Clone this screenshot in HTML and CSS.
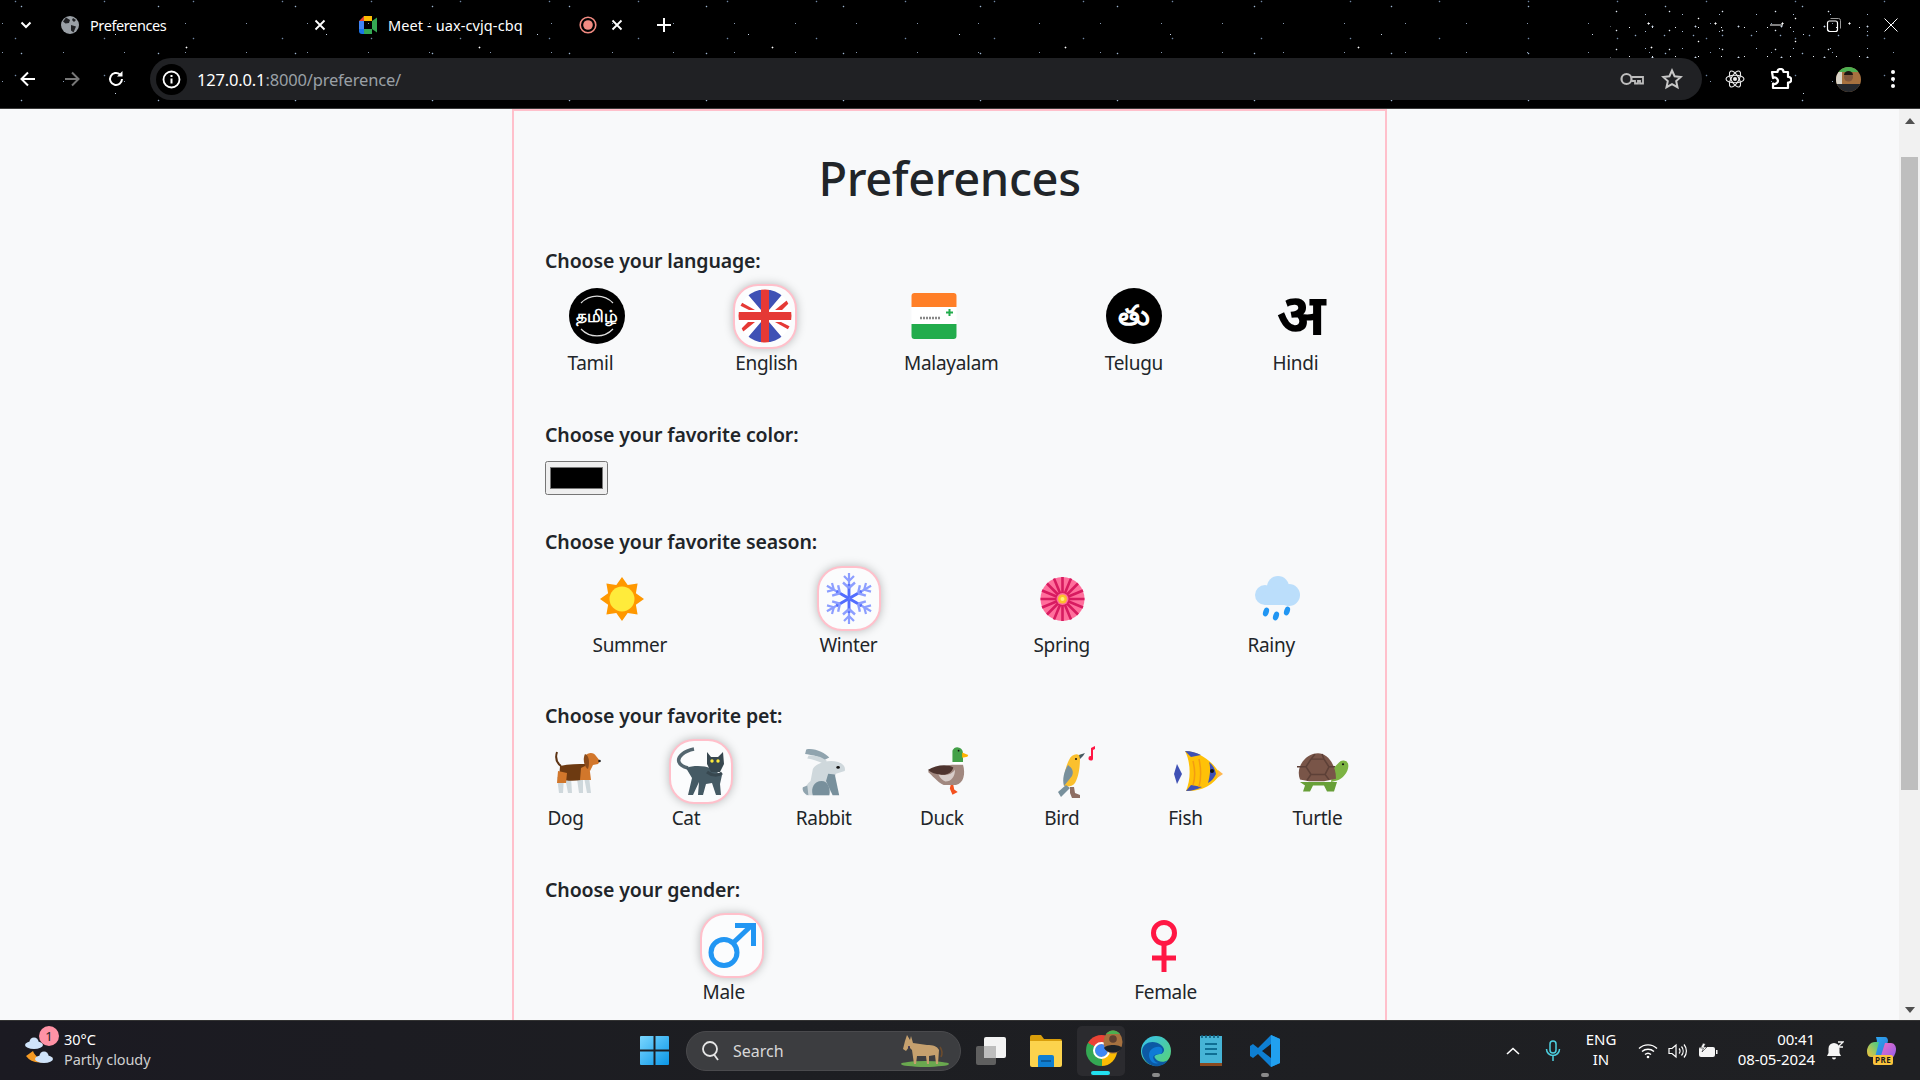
FILE: index.html
```html
<!DOCTYPE html>
<html lang="en">
<head>
    <meta charset="UTF-8">
    <title>Preferences</title>
    <link rel="stylesheet" href="styles.css">
</head>
<body>
<div class="browser">
    <div class="star-cluster"></div>
    <div class="tabstrip">
        <svg class="tab-menu" width="16" height="16" viewBox="0 0 16 16"><path d="M3.5 5.5 8 10l4.5-4.5" fill="none" stroke="#fff" stroke-width="2"/></svg>
        <div class="tab tab-one">
            <svg class="favicon" width="18" height="18" viewBox="0 0 18 18"><circle cx="9" cy="9" r="9" fill="#9aa0a6"/><path d="M5 1.5 9 4 8 7 4.5 7.5 2 5.5ZM10 9l5 1.5-2.5 6-2.5-2ZM12 2l3 2-2 2-2-2Z" fill="#202124"/></svg>
            <span class="tab-title">Preferences</span>
            <svg class="tab-close" width="12" height="12" viewBox="0 0 12 12"><path d="M1.5 1.5l9 9M10.5 1.5l-9 9" stroke="#fff" stroke-width="1.8"/></svg>
        </div>
        <div class="tab tab-two">
            <svg class="favicon" width="18" height="18" viewBox="0 0 18 18"><path d="M0 5 5 0h8v5H5v8H0Z" fill="#ea4335"/><path d="M5 0h8v5H5Z" fill="#fbbc04"/><path d="M0 5h5v8H0Z" fill="#4285f4"/><path d="M0 13h5h8v5H3a3 3 0 0 1-3-3Z" fill="#1a73e8"/><path d="M5 13h8v5H5Z" fill="#34a853"/><path d="M13 5l5-3.5v15L13 13Z" fill="#34a853"/></svg>
            <span class="tab-title">Meet - uax-cvjq-cbq</span>
            <svg class="tab-record" width="18" height="18" viewBox="0 0 18 18"><circle cx="9" cy="9" r="7.800" fill="none" stroke="#f28b82" stroke-width="1.6"/><circle cx="9" cy="9" r="4.800" fill="#f28b82"/></svg>
            <svg class="tab-close" width="12" height="12" viewBox="0 0 12 12"><path d="M1.5 1.5l9 9M10.5 1.5l-9 9" stroke="#fff" stroke-width="1.8"/></svg>
        </div>
        <svg class="new-tab" width="14" height="14" viewBox="0 0 14 14"><path d="M7 0v14M0 7h14" stroke="#fff" stroke-width="2"/></svg>
        <div class="window-buttons">
            <svg width="16" height="16" viewBox="0 0 16 16"><path d="M1 8h13" stroke="#fff" stroke-width="1"/></svg>
            <svg width="16" height="16" viewBox="0 0 16 16"><rect x="1.5" y="4" width="10" height="10.500" rx="2" fill="none" stroke="#fff" stroke-width="1.2"/><path d="M4.5 1.500h8a2 2 0 0 1 2 2v8" fill="none" stroke="#999"/></svg>
            <svg width="16" height="16" viewBox="0 0 16 16"><path d="M1.5 1.5l13 13M14.5 1.5l-13 13" stroke="#fff" stroke-width="1"/></svg>
        </div>
    </div>
    <div class="toolbar">
        <button class="nav-btn"><svg width="18" height="18" viewBox="0 0 18 18"><path d="M16 9H3M9 2.500 2.500 9 9 15.500" fill="none" stroke="#fff" stroke-width="2"/></svg></button>
        <button class="nav-btn"><svg width="18" height="18" viewBox="0 0 18 18"><path d="M2 9h13M9 2.500 15.500 9 9 15.500" fill="none" stroke="#777" stroke-width="2"/></svg></button>
        <button class="nav-btn"><svg width="18" height="18" viewBox="0 0 18 18"><path d="M15 9a6 6 0 1 1-2-4.500" fill="none" stroke="#fff" stroke-width="2"/><path d="M15.500 1v5.500H10Z" fill="#fff"/></svg></button>
        <div class="address">
            <span class="site-info"><svg width="19" height="19" viewBox="0 0 19 19"><circle cx="9.500" cy="9.500" r="8" fill="none" stroke="#fff" stroke-width="1.800"/><path d="M9.500 8.500v5M9.500 5v2" stroke="#fff" stroke-width="2"/></svg></span>
            <span class="url"><span class="url-host">127.0.0.1</span>:8000/preference/</span>
            <svg class="addr-key" width="24" height="14" viewBox="0 0 24 14"><circle cx="6.500" cy="7" r="5" fill="none" stroke="#bdbdbd" stroke-width="2.200"/><path d="M11.500 5H23v6.500h-3V9h-2v2.500h-3V9h-3.500" fill="none" stroke="#bdbdbd" stroke-width="1.800"/></svg>
            <svg class="addr-star" width="22" height="22" viewBox="0 0 22 22"><path d="M11 2.500l2.600 5.700 6.200.7-4.600 4.200 1.300 6.100L11 16.100 5.500 19.200l1.300-6.100L2.200 8.900l6.200-.7Z" fill="none" stroke="#c8c8c8" stroke-width="2"/></svg>
        </div>
        <div class="extensions">
            <svg class="ext-react" width="20" height="20" viewBox="0 0 20 20"><g fill="none" stroke="#eee" stroke-width="1.100"><ellipse cx="10" cy="10" rx="9" ry="3.800"/><ellipse cx="10" cy="10" rx="9" ry="3.800" transform="rotate(60 10 10)"/><ellipse cx="10" cy="10" rx="9" ry="3.800" transform="rotate(120 10 10)"/></g><circle cx="10" cy="10" r="2" fill="#eee"/></svg>
            <svg class="ext-puzzle" width="22" height="22" viewBox="0 0 22 22"><path d="M2 4h5.500a3 3 0 1 1 6 0H18v5a2.800 2.800 0 1 1 0 5.500V20H3v-4.500a3.200 3.200 0 1 0 0-5.500Z" fill="none" stroke="#fff" stroke-width="2.200" stroke-linejoin="round"/></svg>
            <svg class="ext-avatar" width="25" height="25" viewBox="0 0 25 25"><defs><clipPath id="avatarClip"><circle cx="12.500" cy="12.500" r="12.500"/></clipPath></defs><g clip-path="url(#avatarClip)"><rect width="25" height="25" fill="#a6713f"/><rect width="25" height="5" fill="#4caf50"/><rect width="6" y="5" height="12" fill="#d9d4c8"/><circle cx="12.500" cy="10" r="4.500" fill="#80573b"/><path d="M8 8a4.500 4 0 0 1 9 0Z" fill="#1c1612"/><rect y="17" width="25" height="8" fill="#26292e"/></g></svg>
            <svg class="ext-menu" width="6" height="20" viewBox="0 0 6 20"><circle cx="3" cy="3" r="2" fill="#fff"/><circle cx="3" cy="10" r="2" fill="#fff"/><circle cx="3" cy="17" r="2" fill="#fff"/></svg>
        </div>
    </div>
</div>

<div class="viewport">
    <div class="page">
        <div class="card">
            <h1>Preferences</h1>

            <section class="group">
                <h2>Choose your language:</h2>
                <div class="options options-language">
                    <div class="option">
                        <div class="pick"><svg viewBox="0 0 60 60"><circle cx="30" cy="30" r="28" fill="#000"/><path d="M14 17a22 22 0 0 1 32 0M14 43a22 22 0 0 0 32 0" fill="none" stroke="#ddd" stroke-width="1.2"/><text x="30" y="36" class="logo-text logo-tamil">தமிழ்</text></svg></div>
                        <span class="option-name">Tamil</span>
                    </div>
                    <div class="option">
                        <div class="pick selected"><svg viewBox="0 0 60 60"><defs><clipPath id="flagClip"><circle cx="30" cy="30" r="26.500"/></clipPath></defs><g clip-path="url(#flagClip)"><rect width="60" height="60" fill="#fff"/><path d="M9 4 26 4V24ZM34 4H51L34 24ZM9 56H26V36ZM34 56H51L34 36Z" fill="#3f51b5"/><path d="M4 15 20 24H14L4 19ZM56 15 47 24H40L56 11ZM4 45 13 36H20L4 49ZM56 45 40 36H46L56 41Z" fill="#e53935"/><path d="M26 0h8v60h-8ZM0 26h60v8H0Z" fill="#e53935"/></g></svg></div>
                        <span class="option-name">English</span>
                    </div>
                    <div class="option">
                        <div class="pick"><svg viewBox="0 0 60 60"><rect x="7.500" y="7" width="45" height="46" rx="3" fill="#fff"/><path d="M7.500 10a3 3 0 0 1 3-3h39a3 3 0 0 1 3 3v11h-45Z" fill="#ff7f27"/><path d="M7.500 38h45v12a3 3 0 0 1-3 3h-39a3 3 0 0 1-3-3Z" fill="#22ac4c"/><path d="M45.500 23v7M42 26.500h7" stroke="#22ac4c" stroke-width="2"/><path d="M16 32h20" stroke="#888" stroke-width="2.600" stroke-dasharray="2 1"/></svg></div>
                        <span class="option-name">Malayalam</span>
                    </div>
                    <div class="option">
                        <div class="pick"><svg viewBox="0 0 60 60"><circle cx="30" cy="30" r="28" fill="#000"/><text x="30" y="39" class="logo-text logo-telugu">తు</text></svg></div>
                        <span class="option-name">Telugu</span>
                    </div>
                    <div class="option">
                        <div class="pick"><svg viewBox="0 0 60 60"><text x="29" y="49" class="logo-text logo-hindi">अ</text></svg></div>
                        <span class="option-name">Hindi</span>
                    </div>
                </div>
            </section>

            <section class="group group-color">
                <h2>Choose your favorite color:</h2>
                <input class="color-input" type="color" value="#000000">
            </section>

            <section class="group group-season">
                <h2>Choose your favorite season:</h2>
                <div class="options options-season">
                    <div class="option">
                        <div class="pick"><svg viewBox="0 0 60 60"><path d="M30 9l5.700 8.100L45.600 15.400l-1.700 9.900L52 31l-8.100 5.700 1.700 9.900-9.900-1.700L30 53l-5.700-8.100-9.900 1.700 1.700-9.900L8 31l8.100-5.700-1.700-9.900 9.900 1.700Z" fill="#ff9800"/><circle cx="30" cy="31" r="12.500" fill="#ffeb3b"/></svg></div>
                        <span class="option-name">Summer</span>
                    </div>
                    <div class="option">
                        <div class="pick selected"><svg viewBox="0 0 60 60"><defs><g id="flakeArm"><path d="M30 30.500V5" stroke="#8c9eff" stroke-width="2.200"/><path d="M30 13l-5-5M30 13l5-5" stroke="#8c9eff" stroke-width="2.200"/><path d="M30 30.500V16" stroke="#536dfe" stroke-width="2.800"/><path d="M30 20l-6-5.500M30 20l6-5.500" stroke="#8c9eff" stroke-width="2.400"/></g></defs><use href="#flakeArm"/><use href="#flakeArm" transform="rotate(60 30 30.500)"/><use href="#flakeArm" transform="rotate(120 30 30.500)"/><use href="#flakeArm" transform="rotate(180 30 30.500)"/><use href="#flakeArm" transform="rotate(240 30 30.500)"/><use href="#flakeArm" transform="rotate(300 30 30.500)"/></svg></div>
                        <span class="option-name">Winter</span>
                    </div>
                    <div class="option">
                        <div class="pick"><svg viewBox="0 0 60 60"><circle cx="29.500" cy="31" r="22" fill="#ff6f9c"/><g stroke="#d81b60" stroke-width="2.600"><path d="M29.500 9v44M7.500 31h44M14 15.500l31 31M45 15.500l-31 31M21 10.600l17 40.800M38 10.600l-17 40.800M9 22.500l41 17M50 22.500l-41 17"/></g><circle cx="29.500" cy="31" r="6" fill="#ff6f9c"/><circle cx="29.500" cy="31" r="4.500" fill="#fbc02d"/><circle cx="29.500" cy="31" r="2" fill="#fff176"/></svg></div>
                        <span class="option-name">Spring</span>
                    </div>
                    <div class="option">
                        <div class="pick"><svg viewBox="0 0 60 60"><g fill="#bbdefb"><circle cx="31" cy="19" r="11"/><circle cx="18" cy="27" r="10"/><circle cx="42" cy="27" r="11"/><rect x="14" y="24" width="32" height="13" rx="6"/></g><g fill="#2196f3"><ellipse cx="19" cy="44" rx="2.800" ry="4.500" transform="rotate(20 19 44)"/><ellipse cx="29" cy="48" rx="2.800" ry="4.500" transform="rotate(20 29 48)"/><ellipse cx="40" cy="43" rx="2.800" ry="4.500" transform="rotate(20 40 43)"/></g></svg></div>
                        <span class="option-name">Rainy</span>
                    </div>
                </div>
            </section>

            <section class="group">
                <h2>Choose your favorite pet:</h2>
                <div class="options">
                    <div class="option">
                        <div class="pick"><svg viewBox="0 0 60 60"><path d="M10 11c-2 6 0 11 4 14" fill="none" stroke="#5d3313" stroke-width="2"/><path d="M10 36h7l-1 16h-4ZM18 36h6l1 16h-4ZM30 38h6v14h-4ZM37 36h5l2 16h-4Z" fill="#cfd8dc"/><path d="M13 25c9-2 18-2 26-2l3 14c-8 3-20 4-30 1Z" fill="#6d3a11"/><path d="M11 30l9 2-1 10h-9ZM34 27l8-4 2 16H33Z" fill="#d2772b"/><path d="M38 15c3-4 9-4 11 0l4 5-2 3-5 1-3 6-5-4Z" fill="#d2772b"/><path d="M38 13c4 1 5 9 3 15-3-1-6-9-3-15Z" fill="#8a4b1b"/><circle cx="52.500" cy="20" r="1.300" fill="#222"/></svg></div>
                        <span class="option-name">Dog</span>
                    </div>
                    <div class="option">
                        <div class="pick selected"><svg viewBox="0 0 60 60"><path d="M23 8c-10 2-17 8-15 13 1 3 5 5 9 6" fill="none" stroke="#54666f" stroke-width="3.500"/><path d="M15 27c8-3 19-2 24 0l12 7-2 9 1 11h-5l-4-12-6 1-3 11h-5l1-13-6 13h-5l4-17Z" fill="#455a64"/><path d="M36 11l4 5h7l5-5 1 12-4 8h-9l-4-8Z" fill="#37474f"/><path d="M36 31c5 4 11 4 15 1" fill="none" stroke="#37474f" stroke-width="3"/><circle cx="41" cy="20" r="1.700" fill="#ffeb3b"/><circle cx="47" cy="20" r="1.700" fill="#ffeb3b"/></svg></div>
                        <span class="option-name">Cat</span>
                    </div>
                    <div class="option">
                        <div class="pick"><svg viewBox="0 0 60 60"><g transform="translate(-2 3) scale(1.1 .9)"><path d="M12 6c8-2 17 4 21 9l-5 3c-5-5-12-6-17-7Z" fill="#90a4ae"/><path d="M14 13c7-1 13 2 17 6l-3 3c-5-3-10-5-15-6Z" fill="#cfd8dc"/><path d="M18 28c3-7 14-11 23-8 5 2 7 6 6 10l-8 3-6 24H12c-3-6 0-12 4-16Z" fill="#cfd8dc"/><path d="M14 57c-4-1-6-6-5-9l4-2Z" fill="#90a4ae"/><path d="M18 57c-2-8 1-16 8-16 6 0 8 8 7 16Z" fill="#78909c"/><path d="M32 33l6 1 4 23h-6l-6-16Z" fill="#78909c"/><circle cx="41" cy="26" r="1.600" fill="#111"/></g></svg></div>
                        <span class="option-name">Rabbit</span>
                    </div>
                    <div class="option">
                        <div class="pick"><svg viewBox="0 0 60 60"><g transform="scale(.88)"><path d="M38 11a6.500 7.500 0 0 1 12 2v11H38Z" fill="#43a047"/><path d="M49 13l7 3-1 2-6 1Z" fill="#ffb300"/><path d="M39 24h11v4H39Z" fill="#fff"/><path d="M38 27h12c3 10 1 21-8 23H28c-7-3-14-12-18-15 10-6 20-7 28-8Z" fill="#a1887f"/><path d="M10 33c9-6 22-7 29-3-2 7-8 9-15 8-5 0-10-2-14-5Z" fill="#4e342e"/><path d="M22 38c8 2 16 0 19-6 0 8-4 14-11 14-3-1-6-4-8-8Z" fill="#d7ccc8"/><path d="M36 50h3l1 5 4 3-6 3-3-7Z" fill="#f4511e"/><circle cx="45" cy="11" r="1" fill="#111"/></g></svg></div>
                        <span class="option-name">Duck</span>
                    </div>
                    <div class="option">
                        <div class="pick"><svg viewBox="0 0 60 60"><path d="M47 7l4-2v3l-2 1v8a2.300 2.300 0 1 1-2-2Z" fill="#ff1744"/><path d="M25 19c2-5 7-7 10-5l5-1-4 4c0 8-1 18-5 25-3 4-8 4-11 3 0-10 1-18 5-26Z" fill="#fbc02d"/><path d="M35 14l6-2-2 3-3 3Z" fill="#455a64"/><path d="M24 24c4 3 6 6 4 11l-8 10c-2-6 0-15 4-21Z" fill="#78909c"/><path d="M22 44l-8 7 3 5 9-9Z" fill="#78909c"/><path d="M26 46h4l1 6 5 2v3h-8l-2-5Z" fill="#8d6e63"/><circle cx="32" cy="18" r="1" fill="#111"/></svg></div>
                        <span class="option-name">Bird</span>
                    </div>
                    <div class="option">
                        <div class="pick"><svg viewBox="0 0 60 60"><path d="M9 23l5 10-5 10-3-10Z" fill="#3f51b5"/><path d="M17 10c13 0 28 10 35 23-6 11-20 18-34 17 5-12 5-28-1-40Z" fill="#ffc107"/><path d="M17 10c6 0 12 2 16 4l-10 2ZM18 50c6 0 12-2 16-4l-11-2Z" fill="#3f51b5"/><path d="M25 20c2 8 2 18 0 24M31 18c2 9 2 20 0 28" fill="none" stroke="#f39c12" stroke-width="1.500"/><path d="M41 21c4 3 6 7 7 12-2 4-4 7-8 9 2-7 3-15 1-21Z" fill="#3f51b5"/><path d="M50 29l5 4-6 4Z" fill="#ffb74d"/><circle cx="44" cy="30" r="2" fill="#111"/></svg></div>
                        <span class="option-name">Fish</span>
                    </div>
                    <div class="option">
                        <div class="pick"><svg viewBox="0 0 60 60"><g transform="translate(0 2) scale(1 .85)"><path d="M41 30l6-7a5 5 0 0 1 9 1c2 8-5 18-11 20l-6 2Z" fill="#7cb342"/><path d="M8 46h37l-3 11h-7l-3-7H21l-3 7h-7l2-7Z" fill="#689f38"/><path d="M8 43C3 28 14 12 26 12c10 0 18 14 18 30l-12 3H17Z" fill="#795548"/><path d="M19 19h13l5 9-4 9H19l-5-9ZM23 13l-4 6M30 13l2 6M14 28H5M37 28h6M19 37l-4 7M33 37l4 6" fill="none" stroke="#5d4037" stroke-width="1.600"/><circle cx="51" cy="25" r="1.100" fill="#111"/></g></svg></div>
                        <span class="option-name">Turtle</span>
                    </div>
                </div>
            </section>

            <section class="group">
                <h2>Choose your gender:</h2>
                <div class="options options-gender">
                    <div class="option">
                        <div class="pick selected"><svg viewBox="0 0 60 60"><circle cx="22" cy="37.500" r="13" fill="none" stroke="#2196f3" stroke-width="5"/><path d="M31 28 50 10" stroke="#2196f3" stroke-width="5"/><path d="M33 8h21v23h-5V13H33Z" fill="#2196f3"/></svg></div>
                        <span class="option-name">Male</span>
                    </div>
                    <div class="option">
                        <div class="pick"><svg viewBox="0 0 60 60"><circle cx="30" cy="18" r="10.500" fill="none" stroke="#ff1744" stroke-width="5"/><path d="M30 28v29M18 43h24" stroke="#ff1744" stroke-width="5"/></svg></div>
                        <span class="option-name">Female</span>
                    </div>
                </div>
            </section>
        </div>
    </div>
    <div class="scrollbar">
        <span class="arrow-up"></span>
        <div class="scroll-thumb"></div>
        <span class="arrow-down"></span>
    </div>
</div>

<div class="taskbar">
    <div class="weather">
        <svg width="32" height="34" viewBox="0 0 32 34"><path d="M2 22a16 13 0 0 0 27 1c-8 5-17 2-20-6Z" fill="#f59a23"/><g fill="#cfe3fa"><ellipse cx="10" cy="11" rx="9" ry="4"/><circle cx="10" cy="8" r="4.500"/><ellipse cx="20" cy="25" rx="9" ry="4"/><circle cx="20" cy="22" r="4.500"/></g></svg>
        <span class="weather-badge">1</span>
        <div class="weather-text">
            <span class="weather-temp">30°C</span>
            <span class="weather-desc">Partly cloudy</span>
        </div>
    </div>

    <svg class="task-win" width="29" height="29" viewBox="0 0 29 29"><defs><linearGradient id="winGrad" x1="0" y1="0" x2="1" y2="1"><stop offset="0" stop-color="#7ad6ff"/><stop offset="1" stop-color="#0a96e6"/></linearGradient></defs><path d="M0 1a1 1 0 0 1 1-1h12.500v13.500H0ZM15.500 0H28a1 1 0 0 1 1 1v12.500H15.500ZM0 15.500h13.500V29H1a1 1 0 0 1-1-1ZM15.500 15.500H29V28a1 1 0 0 1-1 1H15.500Z" fill="url(#winGrad)"/></svg>

    <div class="task-search">
        <svg width="20" height="22" viewBox="0 0 20 22"><circle cx="9" cy="9" r="7" fill="none" stroke="#e6e6e6" stroke-width="1.800"/><path d="M13 14.500 17 20" stroke="#e6e6e6" stroke-width="1.800"/></svg>
        <span class="task-search-text">Search</span>
        <svg class="donkey" width="50" height="34" viewBox="0 0 50 34"><ellipse cx="26" cy="30" rx="24" ry="3" fill="#6aa84f"/><path d="M8 1l3 5 1-4 2 7 14 2c6 0 10 1 12 5l-1 14h-2l-1-9-6 1v8h-2l-1-8h-9l-1 8h-2l-2-14-3-3-3 4-3-2 2-8Z" fill="#c5a06e"/><path d="M41 13c2 3 3 6 1 10" fill="none" stroke="#6e4c2c" stroke-width="1.500"/><circle cx="10" cy="13" r="1" fill="#2a2350"/></svg>
    </div>

    <svg class="task-view" width="30" height="28" viewBox="0 0 30 28"><rect x="0" y="9" width="20" height="19" rx="2" fill="#5f5f5f"/><rect x="8" y="0" width="22" height="21" rx="2" fill="#f3f3f3"/><rect x="8" y="9" width="12" height="12" fill="#bdbdbd"/></svg>

    <svg class="task-folder" width="32" height="32" viewBox="0 0 32 32"><path d="M0 2a2 2 0 0 1 2-2h9l3 4h16a2 2 0 0 1 2 2v3H0Z" fill="#d99e0b"/><path d="M0 6h32v24a2 2 0 0 1-2 2H2a2 2 0 0 1-2-2Z" fill="#fcd34d"/><path d="M8 22a2 2 0 0 1 2-2h12a2 2 0 0 1 2 2v10H8Z" fill="#0f7fd2"/><path d="M11 26h10" stroke="#0a4f8a" stroke-width="1.500"/></svg>

    <div class="task-chrome">
        <div class="chrome-logo"><span class="chrome-eye"></span></div>
        <svg class="chrome-profile" width="20" height="24" viewBox="0 0 20 24"><ellipse cx="10" cy="12" rx="9.500" ry="11.500" fill="#a6713f"/><path d="M10 .5a9.500 11.500 0 0 1 7 3.500H3A9.500 11.500 0 0 1 10 .5Z" fill="#4caf50"/><circle cx="10" cy="9" r="3.800" fill="#5f4030"/><path d="M1 18c2-4 16-4 18 0-3 6-15 6-18 0Z" fill="#1e2227"/></svg>
        <span class="chrome-active"></span>
    </div>

    <div class="task-edge">
        <svg width="30" height="32" viewBox="0 0 30 32"><defs><linearGradient id="edgeA" x1="0" y1="0" x2="1" y2="1"><stop offset="0" stop-color="#35c1f1"/><stop offset="1" stop-color="#5ad36f"/></linearGradient></defs><circle cx="15" cy="16" r="15" fill="url(#edgeA)"/><path d="M1 16C2 6 14 5 20 10c5 4 3 8 0 9-3 0-8 1-6 4 2 4 9 5 13 2-3 5-9 7-14 6-8-2-12-9-12-15Z" fill="#0c59a4"/><path d="M8 20c0-5 5-9 11-8 3 1 3 5 1 7-5 0-10 1-7 6 1 2 3 3 5 3-6 2-10-3-10-8Z" fill="#0f7bd6"/></svg>
        <span class="task-dot"></span>
    </div>

    <svg class="task-notes" width="22" height="32" viewBox="0 0 22 32"><rect y="1" width="22" height="27" fill="#46b4d6"/><rect y="28" width="22" height="3" fill="#8b4a20"/><path d="M2 0v3M6 0v3M10 0v3M14 0v3M18 0v3" stroke="#0f5f80" stroke-width="1.600"/><path d="M5 9h12M5 14h12M5 19h12" stroke="#0f6f94" stroke-width="2"/></svg>

    <div class="task-code">
        <svg width="30" height="32" viewBox="0 0 30 32"><path d="M21 0 30 4v24l-9 4L8 19l-5 4-3-2v-10l3-2 5 4Z" fill="#0e7fd3"/><path d="M21 0 30 4v24l-9 4Z" fill="#21a0ef"/><path d="M21 9v14l-9-7Z" fill="#1c1d22"/></svg>
        <span class="task-dot"></span>
    </div>

    <div class="tray">
        <svg class="tray-caret" width="14" height="8" viewBox="0 0 14 8"><path d="M1 7l6-5.500L13 7" fill="none" stroke="#fff" stroke-width="1.600"/></svg>
        <svg class="tray-mic" width="16" height="22" viewBox="0 0 16 22"><rect x="5" y="1" width="6" height="12" rx="3" fill="none" stroke="#4dd0e1" stroke-width="1.500"/><path d="M1.500 9a6.500 6.500 0 0 0 13 0M8 15.500V21" fill="none" stroke="#4dd0e1" stroke-width="1.500"/></svg>
        <div class="tray-lang"><span>ENG</span><span>IN</span></div>
        <svg class="tray-wifi" width="20" height="16" viewBox="0 0 20 16"><path d="M1 5.500a13 13 0 0 1 18 0M4 8.500a9 9 0 0 1 12 0M7 11.500a4.500 4.500 0 0 1 6 0" fill="none" stroke="#fff" stroke-width="1.400"/><circle cx="10" cy="14" r="1.300" fill="#fff"/></svg>
        <svg class="tray-volume" width="20" height="16" viewBox="0 0 20 16"><path d="M1 5.500h3L8 2v12l-4-3.500H1Z" fill="none" stroke="#fff" stroke-width="1.200"/><path d="M11 5.500a3.500 3.500 0 0 1 0 5M13.500 3.500a7 7 0 0 1 0 9M16 1.500a10 10 0 0 1 0 13" fill="none" stroke="#fff" stroke-width="1.200"/></svg>
        <svg class="tray-battery" width="20" height="16" viewBox="0 0 20 16"><rect x="1" y="4" width="16" height="10" rx="2" fill="#f5f5f5"/><rect x="18" y="7" width="1.500" height="4" fill="#f5f5f5"/><path d="M5 0 2.500 5h3L4 9l5-5H6l1.500-3Z" fill="#f5f5f5" stroke="#1f2023" stroke-width=".6"/></svg>
        <div class="tray-clock"><span>00:41</span><span>08-05-2024</span></div>
        <svg class="tray-bell" width="18" height="20" viewBox="0 0 18 20"><path d="M8 2a5.500 5.500 0 0 0-5.500 5.500V12L1 15h14l-1.500-3V7.500A5.500 5.500 0 0 0 8 2Z" fill="#f5f5f5"/><path d="M6 16.500a2 2 0 0 0 4 0Z" fill="#f5f5f5"/><path d="M12 1h5l-5 5h5" fill="none" stroke="#f5f5f5" stroke-width="1.300"/></svg>
        <div class="tray-copilot">
            <svg width="29" height="23" viewBox="0 0 29 23"><defs><linearGradient id="copA" x1="0" y1="0" x2="1" y2="1"><stop offset="0" stop-color="#2dabf2"/><stop offset="1" stop-color="#2d7bd8"/></linearGradient><linearGradient id="copB" x1="0" y1="0" x2="1" y2="1"><stop offset="0" stop-color="#f070c0"/><stop offset="1" stop-color="#8e5cf0"/></linearGradient><linearGradient id="copC" x1="0" y1="1" x2="1" y2="0"><stop offset="0" stop-color="#f7c33a"/><stop offset="1" stop-color="#3ecb8a"/></linearGradient></defs><path d="M9 0h9c2 0 3 2 3 4L17 18H6l4-14Z" fill="url(#copA)"/><path d="M0 14c0-4 3-9 8-9h4L8 20H4c-3 0-4-3-4-6Z" fill="url(#copC)"/><path d="M18 6h6c3 0 5 3 5 6 0 5-3 10-7 10h-9Z" fill="url(#copB)"/></svg>
            <span class="copilot-tag">PRE</span>
        </div>
    </div>
</div>
</body>
</html>
```

FILE: styles.css
```css
* {
    box-sizing: border-box;
}
body {
    margin: 0;
    width: 1920px;
    height: 1080px;
    overflow: hidden;
    display: flex;
    flex-direction: column;
    font-family: "Noto Sans", "Open Sans", Arial, sans-serif;
    background: #f8f9fa;
    color: #212529;
}

/* browser chrome */
.browser {
    position: relative;
    height: 109px;
    flex-shrink: 0;
    background-color: #000;
    background-image:
        radial-gradient(circle, #fff 0.6px, transparent 1.2px),
        radial-gradient(circle, #9db4d0 0.6px, transparent 1.1px),
        radial-gradient(circle, #c9d7e8 0.5px, transparent 1px),
        radial-gradient(circle, #6f86a3 0.6px, transparent 1.1px),
        radial-gradient(circle, #8899b0 0.5px, transparent 1px);
    background-size: 293px 71px, 137px 47px, 211px 59px, 89px 37px, 61px 29px;
    background-position: 40px 12px, 90px 30px, 10px 5px, 60px 20px, 33px 9px;
    border-bottom: 1px solid #3a3a3a;
}
.star-cluster {
    position: absolute;
    left: 1610px;
    top: 0;
    width: 270px;
    height: 58px;
    background-image:
        radial-gradient(circle, #fff 0.8px, transparent 1.3px),
        radial-gradient(circle, #cfdcec 0.7px, transparent 1.2px),
        radial-gradient(circle, #fff 0.6px, transparent 1.1px),
        radial-gradient(circle, #8fa6c4 0.6px, transparent 1.1px),
        radial-gradient(circle, #dfe8f2 0.6px, transparent 1.1px),
        radial-gradient(circle, #a9bcd4 0.5px, transparent 1px),
        radial-gradient(circle, #eef3f8 0.5px, transparent 1px);
    background-size: 67px 41px, 43px 31px, 97px 23px, 29px 37px, 53px 19px, 37px 17px, 23px 29px;
    background-position: 5px 3px, 21px 11px, 40px 7px, 11px 17px, 33px 2px, 17px 6px, 8px 13px;
}
.tabstrip {
    position: relative;
    height: 50px;
    display: flex;
    align-items: center;
    color: #fff;
}
.tab-menu {
    margin-left: 18px;
    margin-right: 27px;
}
.tab {
    display: flex;
    align-items: center;
}
.tab-one {
    width: 268px;
}
.tab-two {
    width: 267px;
    margin-left: 30px;
}
.tab-title {
    margin-left: 11px;
    font-size: 14.5px;
}
.tab-one .tab-title {
    letter-spacing: -0.4px;
}
.tab-two .tab-title {
    letter-spacing: 0.1px;
}
.tab-one .tab-close {
    margin-left: auto;
    margin-right: 3px;
}
.tab-two .tab-record {
    margin-left: auto;
}
.tab-two .tab-close {
    margin-left: 14px;
    margin-right: 3px;
}
.new-tab {
    margin-left: 31px;
}
.window-buttons {
    margin-left: auto;
    margin-right: 21px;
    display: flex;
    gap: 41px;
}
.toolbar {
    position: relative;
    height: 58px;
    display: flex;
    align-items: flex-start;
    padding: 8px 0 0 6px;
}
.nav-btn {
    width: 44px;
    height: 42px;
    padding: 0;
    border: none;
    background: none;
    display: flex;
    align-items: center;
    justify-content: center;
}
.address {
    width: 1552px;
    height: 42px;
    margin-left: 12px;
    padding: 0 19px 0 6px;
    display: flex;
    align-items: center;
    background: #202124;
    border-radius: 21px;
}
.site-info {
    width: 31px;
    height: 31px;
    background: #000;
    border-radius: 50%;
    display: flex;
    align-items: center;
    justify-content: center;
}
.url {
    margin-left: 10px;
    font-size: 16.5px;
    letter-spacing: -0.17px;
    color: #9aa0a6;
}
.url-host {
    color: #fff;
}
.addr-key {
    margin-left: auto;
}
.addr-star {
    margin-left: 17px;
}
.extensions {
    height: 42px;
    display: flex;
    align-items: center;
}
.ext-react {
    margin-left: 23px;
}
.ext-puzzle {
    margin-left: 25px;
}
.ext-avatar {
    margin-left: 44px;
}
.ext-menu {
    margin-left: 29px;
}

/* page */
.viewport {
    flex: 1;
    min-height: 0;
    display: flex;
}
.page {
    flex: 1;
    min-width: 0;
    overflow: hidden;
    display: flex;
    align-items: flex-start;
    justify-content: center;
}
.card {
    width: 875px;
    flex-shrink: 0;
    padding: 0 31px 40px;
    border: 2px solid #ffc0cb;
}
h1 {
    margin: 32px 0 34px;
    text-align: center;
    font-size: 47px;
    line-height: 70px;
    font-weight: 500;
    letter-spacing: -0.4px;
}
.group {
    margin-bottom: 45px;
}
h2 {
    margin: 0 0 9px;
    font-size: 19.5px;
    line-height: 28px;
    font-weight: 600;
    letter-spacing: -0.12px;
}
.group-color {
    margin-bottom: 33px;
}
.group-season {
    margin-bottom: 44px;
}
.color-input {
    display: block;
    width: 63px;
    height: 34px;
    margin: 12px 0 0;
}
.options {
    display: flex;
    justify-content: space-between;
}
.options-language {
    padding: 0 20px;
}
.options-season {
    margin-top: 10px;
    padding: 0 45px;
}
.options-gender {
    padding: 0 157px 0 155px;
}
.option {
    display: flex;
    flex-direction: column;
    align-items: flex-start;
}
.pick {
    width: 64px;
    height: 65px;
    border: 2px solid transparent;
    border-radius: 25px;
}
.pick svg {
    display: block;
    width: 60px;
    height: 60px;
    overflow: visible;
}
.pick.selected {
    border-color: #ffc0cb;
    background: #fbfcfd;
    box-shadow: 0 0 10px rgba(0, 0, 0, 0.25);
}
.option-name {
    margin-top: 1px;
    padding-left: 2.5px;
    font-size: 19px;
    line-height: 26px;
    letter-spacing: -0.3px;
}
.logo-text {
    text-anchor: middle;
}
.logo-tamil {
    font-size: 17px;
    font-weight: 700;
    fill: #fff;
}
.logo-telugu {
    font-size: 28px;
    font-weight: 700;
    fill: #fff;
}
.logo-hindi {
    font-size: 58px;
    font-weight: 700;
    fill: #000;
}

/* scrollbar */
.scrollbar {
    width: 21px;
    background: #f1f1f1;
    display: flex;
    flex-direction: column;
    align-items: center;
    padding: 9px 0 7px;
}
.arrow-up,
.arrow-down {
    width: 0;
    height: 0;
    border-left: 5px solid transparent;
    border-right: 5px solid transparent;
}
.arrow-up {
    border-bottom: 6px solid #505050;
}
.arrow-down {
    margin-top: auto;
    border-top: 6px solid #505050;
}
.scroll-thumb {
    width: 17px;
    height: 633px;
    margin-top: 33px;
    background: #bebebe;
}

/* taskbar */
.taskbar {
    height: 60px;
    flex-shrink: 0;
    display: flex;
    align-items: center;
    background: linear-gradient(90deg, #1b1a22, #1d1e22 40%, #1f2023);
    border-top: 1px solid #333;
    color: #fff;
}
.weather {
    position: relative;
    width: 640px;
    padding-left: 24px;
    display: flex;
    align-items: center;
}
.weather-badge {
    position: absolute;
    left: 39px;
    top: -3px;
    width: 20px;
    height: 20px;
    border-radius: 50%;
    background: #ff92a5;
    color: #222;
    font-size: 13px;
    line-height: 20px;
    text-align: center;
}
.weather-text {
    margin-left: 8px;
    padding-bottom: 4px;
    display: flex;
    flex-direction: column;
    font-size: 14.5px;
    line-height: 20px;
}
.weather-desc {
    color: #cfcfcf;
    letter-spacing: -0.1px;
}
.task-search {
    width: 275px;
    height: 40px;
    margin-left: 17px;
    padding: 0 11px 0 14px;
    display: flex;
    align-items: center;
    background: #3c3d40;
    border: 1px solid #4a4a4d;
    border-radius: 20px;
}
.task-search-text {
    margin-left: 12px;
    font-size: 16px;
    color: #d8d8d8;
}
.donkey {
    margin-left: auto;
}
.task-view {
    margin-left: 15px;
}
.task-folder {
    margin-left: 24px;
}
.task-chrome {
    position: relative;
    width: 48px;
    height: 50px;
    margin-left: 15px;
    background: #2b2b2f;
    border-radius: 5px;
}
.chrome-logo {
    position: absolute;
    left: 9px;
    top: 9px;
    width: 31px;
    height: 31px;
    border-radius: 50%;
    background: conic-gradient(from -60deg, #ea4335 0 120deg, #fbbc04 120deg 240deg, #34a853 240deg 360deg);
}
.chrome-eye {
    position: absolute;
    left: 9px;
    top: 9px;
    width: 13px;
    height: 13px;
    border-radius: 50%;
    background: #3f86f4;
    outline: 2px solid #fff;
}
.chrome-profile {
    position: absolute;
    left: 26px;
    top: 4px;
}
.chrome-active {
    position: absolute;
    left: 14px;
    bottom: 1px;
    width: 19px;
    height: 4px;
    border-radius: 2px;
    background: #22e0f0;
}
.task-edge {
    position: relative;
    width: 30px;
    height: 32px;
    margin-left: 16px;
}
.task-notes {
    margin-left: 29px;
}
.task-code {
    position: relative;
    width: 30px;
    height: 32px;
    margin-left: 28px;
}
.task-dot {
    position: absolute;
    left: 11px;
    bottom: -10px;
    width: 8px;
    height: 4px;
    border-radius: 2px;
    background: #8a8a8a;
}
.tray {
    margin-left: auto;
    width: 427px;
    display: flex;
    align-items: center;
}
.tray-caret {
    margin-left: 13px;
}
.tray-mic {
    margin-left: 25px;
}
.tray-lang {
    width: 56px;
    margin-left: 12px;
    padding-bottom: 3px;
    display: flex;
    flex-direction: column;
    align-items: center;
    font-size: 15px;
    line-height: 20px;
}
.tray-wifi {
    margin-left: 9px;
}
.tray-volume {
    margin-left: 10px;
}
.tray-battery {
    margin-left: 10px;
}
.tray-clock {
    width: 97px;
    padding-bottom: 4px;
    display: flex;
    flex-direction: column;
    align-items: flex-end;
    font-size: 15px;
    line-height: 20px;
    letter-spacing: -0.1px;
}
.tray-bell {
    margin-left: 11px;
}
.tray-copilot {
    position: relative;
    width: 29px;
    height: 27px;
    margin-left: 23px;
}
.copilot-tag {
    position: absolute;
    left: 6px;
    top: 18px;
    padding: 0 2px;
    background: #f9c33c;
    color: #1a1a1a;
    border-radius: 2px;
    font-size: 8px;
    line-height: 10px;
    font-weight: 700;
    letter-spacing: 0.5px;
}
```
